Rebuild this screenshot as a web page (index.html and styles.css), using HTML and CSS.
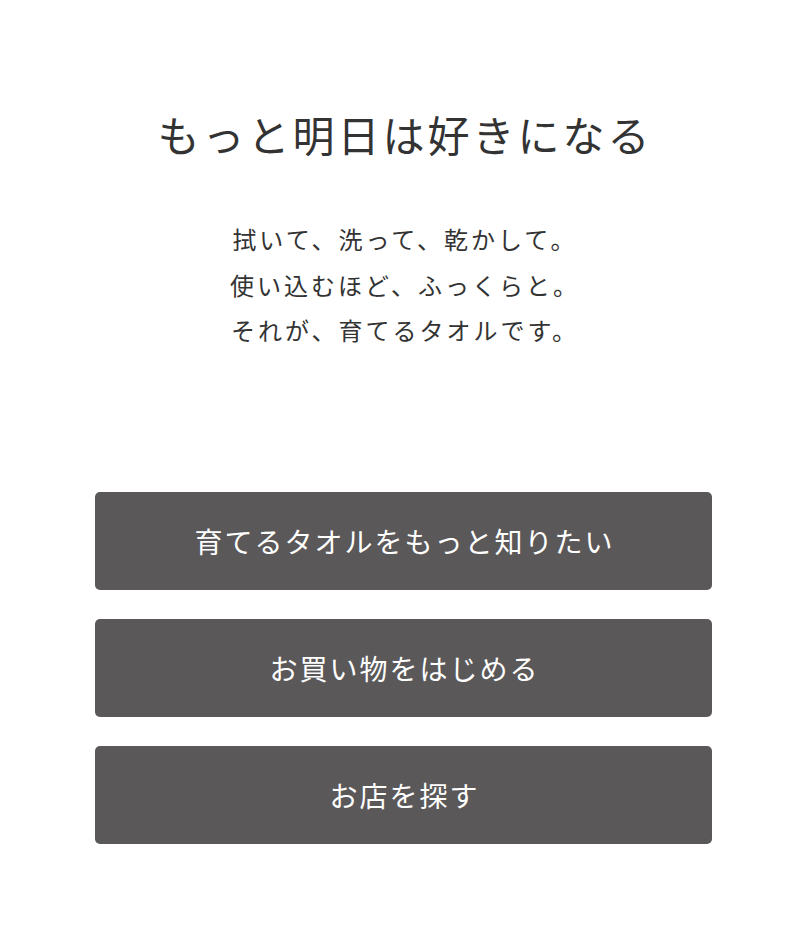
FILE: index.html
```html
<!DOCTYPE html>
<html lang="ja">
<head>
<meta charset="utf-8">
<link rel="stylesheet" href="styles.css">
</head>
<body>
<main class="page">
  <h1 class="title">もっと明日は好きになる</h1>
  <p class="lead">拭いて、洗って、乾かして。<br>使い込むほど、ふっくらと。<br>それが、育てるタオルです。</p>
  <nav class="actions">
    <a class="btn" href="#">育てるタオルをもっと知りたい</a>
    <a class="btn" href="#">お買い物をはじめる</a>
    <a class="btn" href="#">お店を探す</a>
  </nav>
</main>
</body>
</html>
```
FILE: styles.css
```css
html, body { margin: 0; padding: 0; background: #fff; }
body { font-family: "Noto Sans CJK JP", "Noto Sans", sans-serif; color: #333; }
.page { display: flex; flex-direction: column; align-items: center; padding-top: 104px; padding-left: 2px; }
.title { margin: 0; font-size: 42px; font-weight: 400; line-height: 60px; letter-spacing: 3px; padding-left: 3px; color: #333; }
.lead { margin: 52px 0 0; font-size: 24px; line-height: 45.5px; letter-spacing: 3px; padding-left: 3px; text-align: center; color: #333; }
.actions { margin-top: 139px; width: 617px; display: flex; flex-direction: column; gap: 29px; }
.btn { display: flex; align-items: center; justify-content: center; height: 98px; background: #5a5859; color: #fff; border-radius: 5px; text-decoration: none; font-size: 28px; letter-spacing: 2px; padding-left: 2px; }
```
